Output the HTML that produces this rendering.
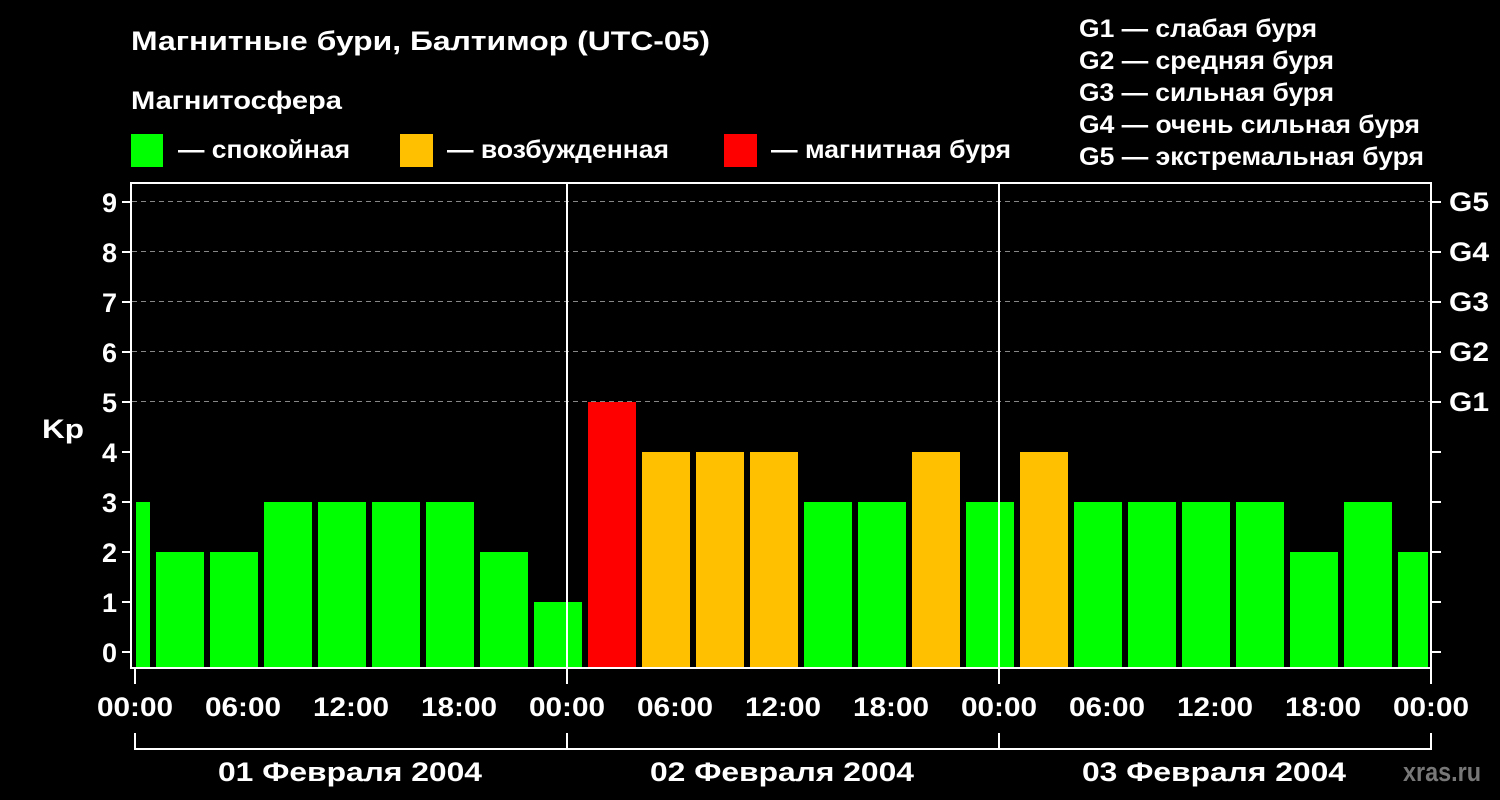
<!DOCTYPE html><html><head><meta charset="utf-8"><style>body{margin:0;background:#000}svg{display:block}text{font-family:"Liberation Sans",sans-serif;font-weight:bold;fill:#fff}</style></head><body>
<svg width="1500" height="800" xmlns="http://www.w3.org/2000/svg">
<rect width="1500" height="800" fill="#000"/>
<text x="131" y="50" font-size="27" textLength="579" lengthAdjust="spacingAndGlyphs">Магнитные бури, Балтимор (UTC-05)</text>
<text x="131" y="109" font-size="25" textLength="211" lengthAdjust="spacingAndGlyphs">Магнитосфера</text>
<rect x="131" y="134" width="32" height="33" fill="#0f0"/><text x="178" y="158" font-size="25" textLength="172" lengthAdjust="spacingAndGlyphs">— спокойная</text>
<rect x="400" y="134" width="33" height="33" fill="#ffc000"/><text x="447" y="158" font-size="25" textLength="222" lengthAdjust="spacingAndGlyphs">— возбужденная</text>
<rect x="724" y="134" width="33" height="33" fill="#f00"/><text x="771" y="158" font-size="25" textLength="240" lengthAdjust="spacingAndGlyphs">— магнитная буря</text>
<g font-size="25"><text x="1079" y="37" textLength="238" lengthAdjust="spacingAndGlyphs">G1 — слабая буря</text><text x="1079" y="69" textLength="255" lengthAdjust="spacingAndGlyphs">G2 — средняя буря</text><text x="1079" y="101" textLength="255" lengthAdjust="spacingAndGlyphs">G3 — сильная буря</text><text x="1079" y="133" textLength="341" lengthAdjust="spacingAndGlyphs">G4 — очень сильная буря</text><text x="1079" y="165" textLength="345" lengthAdjust="spacingAndGlyphs">G5 — экстремальная буря</text></g>
<g stroke="#888" stroke-dasharray="5,4" stroke-width="1"><line x1="132" y1="201.5" x2="1430" y2="201.5"/><line x1="132" y1="251.5" x2="1430" y2="251.5"/><line x1="132" y1="301.5" x2="1430" y2="301.5"/><line x1="132" y1="351.5" x2="1430" y2="351.5"/><line x1="132" y1="401.5" x2="1430" y2="401.5"/></g>
<g id="bars"></g>
<g stroke="#fff" stroke-width="2" fill="none">
<rect x="131" y="183" width="1300" height="485"/>
<line x1="567" y1="183" x2="567" y2="668"/><line x1="999" y1="183" x2="999" y2="668"/>
<path d="M135 668v16M567 668v16M999 668v16M1431 668v16M135 733v16H1431v-16M567 733v16M999 733v16"/>
</g>
<g stroke="#fff" stroke-width="2" id="ticks"></g>
<g font-size="27" text-anchor="end" id="yl"></g>
<text x="42" y="438" font-size="27" textLength="42" lengthAdjust="spacingAndGlyphs">Kp</text>
<g font-size="27"><text x="1449" y="211" textLength="40" lengthAdjust="spacingAndGlyphs">G5</text><text x="1449" y="261" textLength="40" lengthAdjust="spacingAndGlyphs">G4</text><text x="1449" y="311" textLength="40" lengthAdjust="spacingAndGlyphs">G3</text><text x="1449" y="361" textLength="40" lengthAdjust="spacingAndGlyphs">G2</text><text x="1449" y="411" textLength="40" lengthAdjust="spacingAndGlyphs">G1</text></g>
<g font-size="27" id="tl"></g>
<g font-size="27"><text x="218" y="781" textLength="264" lengthAdjust="spacingAndGlyphs">01 Февраля 2004</text><text x="650" y="781" textLength="264" lengthAdjust="spacingAndGlyphs">02 Февраля 2004</text><text x="1082" y="781" textLength="264" lengthAdjust="spacingAndGlyphs">03 Февраля 2004</text></g>
<text x="1403" y="781" font-size="27" textLength="78" lengthAdjust="spacingAndGlyphs" style="fill:#777">xras.ru</text>
</svg>
<script>
var v=[3,2,2,3,3,3,3,2,1,5,4,4,4,3,3,4,3,4,3,3,3,3,2,3,2],b='';
v.forEach(function(k,i){var x=102+i*54,w=48;if(x<136){w-=136-x;x=136}if(x+w>1428)w=1428-x;var c=k>=5?'#f00':k==4?'#ffc000':'#0f0';b+='<rect x="'+x+'" y="'+(652-50*k)+'" width="'+w+'" height="'+(16+50*k)+'" fill="'+c+'"/>'});
document.getElementById('bars').innerHTML=b;
var t='',l='';for(var k=0;k<=9;k++){var y=652-50*k;t+='<line x1="122" y1="'+y+'" x2="131" y2="'+y+'"/><line x1="1431" y1="'+y+'" x2="1441" y2="'+y+'"/>';l+='<text x="117" y="'+(y+10)+'">'+k+'</text>'}
document.getElementById('ticks').innerHTML=t;document.getElementById('yl').innerHTML=l;
var h=['00:00','06:00','12:00','18:00'],s='';for(var i=0;i<13;i++){s+='<text x="'+(97+i*108)+'" y="716" textLength="76" lengthAdjust="spacingAndGlyphs">'+h[i%4]+'</text>'}
document.getElementById('tl').innerHTML=s;
</script>
</body></html>
